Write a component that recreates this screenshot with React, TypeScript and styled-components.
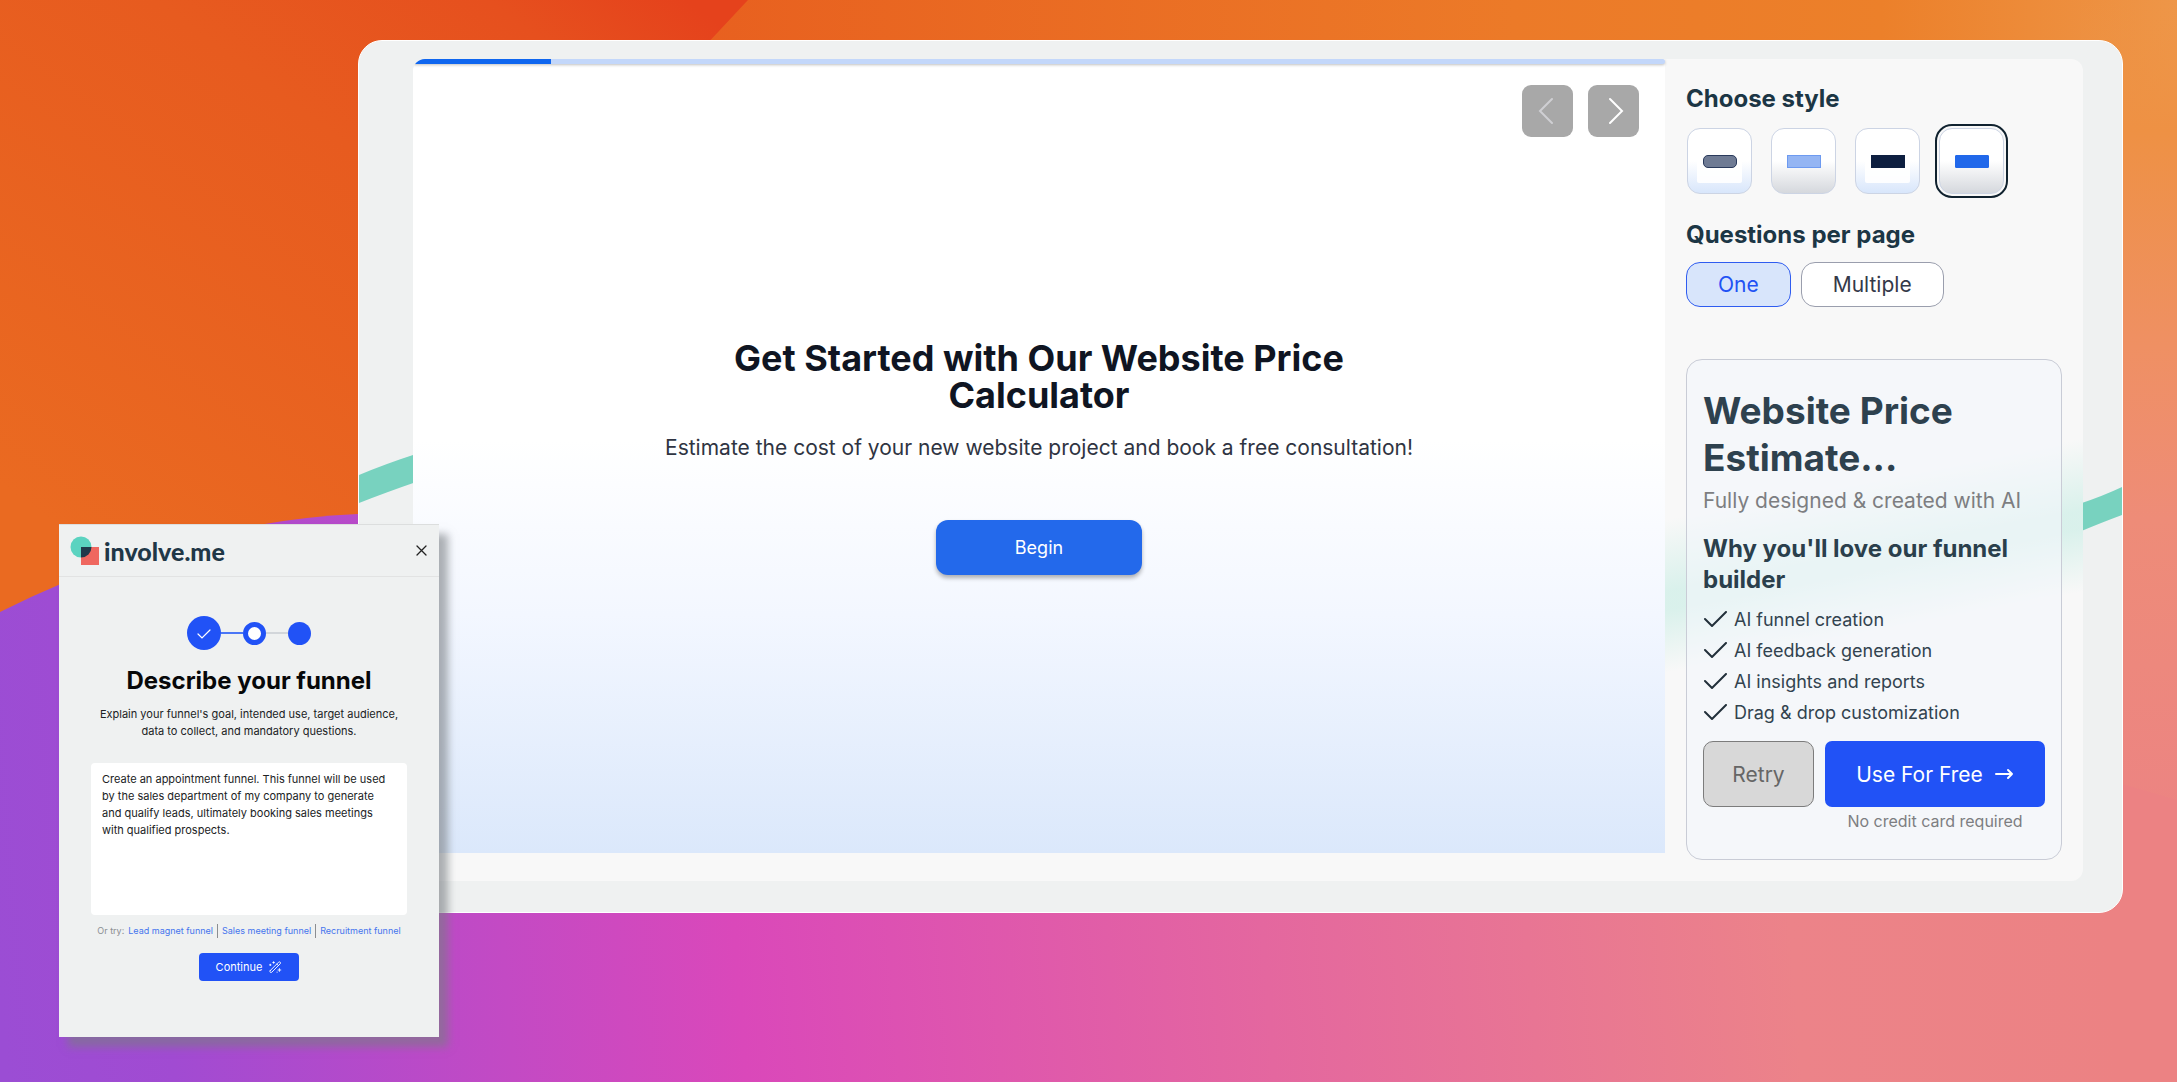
import React from "react";
import styled, { createGlobalStyle, css } from "styled-components";

const sans = `Inter, "Liberation Sans", sans-serif`;

const GlobalStyle = createGlobalStyle`
  *, *::before, *::after { box-sizing: border-box; }
  body { margin: 0; font-family: ${sans}; }
  h1, h2, h3, p, ul { margin: 0; padding: 0; }
  button, textarea { font-family: inherit; }
  button { cursor: pointer; padding: 0; }
`;

const Page = styled.main`
  position: relative;
  min-height: 100vh;
  padding: 40px 54px 168px 358px;
  overflow: hidden;
`;

const Backdrop = styled.svg`
  position: absolute;
  inset: 0;
  width: 100%;
  height: 100%;
`;

const Window = styled.section`
  position: relative;
  padding: 18px 39px 31px 54px;
  border: 1px solid #fff;
  border-radius: 24px;
  background: #eff1f1;
  overflow: hidden;
`;

const Builder = styled.div`
  position: relative;
  display: grid;
  grid-template-columns: minmax(0, 1fr) 418px;
  border-radius: 12px;
  background: #f8f8f8;
  overflow: hidden;
`;

const Preview = styled.section`
  display: flex;
  flex-direction: column;
  margin-bottom: 28px;
  background: linear-gradient(#fff 48%, #f3f7ff 70%, #dbe8fb);
`;

const Progress = styled.div`
  height: 5px;
  border-radius: 0 3px 3px 0;
  background: #c3d7fa;
  box-shadow: 0 1px 3px rgba(0, 0, 0, 0.25);
`;

const ProgressFill = styled.div`
  height: 100%;
  background: #0f66ef;
`;

const Pager = styled.nav`
  display: flex;
  justify-content: flex-end;
  gap: 15px;
  padding: 21px 26px 0;
`;

const PagerButton = styled.button<{ $dim?: boolean }>`
  display: grid;
  place-items: center;
  width: 51px;
  height: 52px;
  border: 0;
  border-radius: 9px;
  background: #a8a8a8;
  color: ${(p) => (p.$dim ? "#cfcfd3" : "#fff")};
`;

const Intro = styled.div`
  display: flex;
  flex-direction: column;
  align-items: center;
  max-width: 760px;
  margin: 203px auto 0;
  text-align: center;
`;

const IntroTitle = styled.h1`
  max-width: 660px;
  color: #0f1522;
  font-size: 36px;
  line-height: 37px;
  font-weight: 700;
`;

const IntroText = styled.p`
  margin-top: 19px;
  color: #2f3442;
  font-size: 21px;
  line-height: 30px;
`;

const BeginButton = styled.button`
  width: 206px;
  height: 55px;
  margin-top: 57px;
  border: 0;
  border-radius: 12px;
  background: #2369eb;
  box-shadow: 0 3px 4px rgba(0, 0, 0, 0.3);
  color: #fff;
  font-size: 18px;
`;

const Side = styled.aside`
  padding: 25px 21px 21px;
  background: linear-gradient(
    169deg,
    rgba(214, 240, 234, 0) 51%,
    rgba(214, 240, 234, 0.9) 59%,
    rgba(214, 240, 234, 0.9) 61%,
    rgba(214, 240, 234, 0) 68%
  );
`;

const SideTitle = styled.h2`
  color: #1c3645;
  font-size: 24px;
  line-height: 30px;
  font-weight: 700;
`;

const Styles = styled.div`
  display: flex;
  gap: 19px;
  margin: 14px 1px 26px;
`;

const StyleButton = styled.button<{ $tone: string; $selected?: boolean }>`
  display: grid;
  place-items: center;
  width: 65px;
  height: 66px;
  border: 1px solid #ccd4e4;
  border-radius: 13px;
  background: linear-gradient(#fff 50%, ${(p) => p.$tone});
  ${(p) =>
    p.$selected &&
    css`
      outline: 2px solid #10222f;
      outline-offset: 2px;
    `}
`;

const Sheet = styled.span<{ $visible?: boolean }>`
  display: grid;
  place-items: center;
  width: 45px;
  height: 44px;
  border-radius: 2px;
  background: ${(p) => (p.$visible ? "rgba(255, 255, 255, 0.92)" : "transparent")};
`;

const Swatch = styled.span<{ $fill: string; $line: string; $radius: number }>`
  width: 34px;
  height: 13px;
  border: 1px solid ${(p) => p.$line};
  border-radius: ${(p) => p.$radius}px;
  background: ${(p) => p.$fill};
`;

const Chips = styled.div`
  display: flex;
  gap: 10px;
  margin-top: 12px;
`;

const Chip = styled.button<{ $on?: boolean }>`
  height: 45px;
  padding: 0 31px;
  border: 1px solid ${(p) => (p.$on ? "#2f5cf0" : "#9a9ead")};
  border-radius: 14px;
  background: ${(p) => (p.$on ? "#d8e5fb" : "#fff")};
  color: ${(p) => (p.$on ? "#2152f4" : "#343949")};
  font-size: 21px;
`;

const Offer = styled.section`
  margin-top: 52px;
  padding: 27px 16px 28px;
  border: 1px solid #c9ccd6;
  border-radius: 16px;
  background: rgba(244, 247, 252, 0.6);
`;

const OfferTitle = styled.h2`
  color: #2e414e;
  font-size: 37px;
  line-height: 47px;
  font-weight: 700;
`;

const OfferText = styled.p`
  margin-top: 5px;
  color: #7d7e81;
  font-size: 21px;
  line-height: 30px;
`;

const OfferSubtitle = styled.h3`
  margin-top: 17px;
  color: #2a3f4c;
  font-size: 24px;
  line-height: 31px;
  font-weight: 700;
`;

const Benefits = styled.ul`
  margin-top: 9px;
  list-style: none;
`;

const Benefit = styled.li`
  display: flex;
  align-items: center;
  gap: 7px;
  color: #32434f;
  font-size: 18px;
  line-height: 31px;
`;

const Actions = styled.div`
  display: grid;
  grid-template-columns: 111px 1fr;
  gap: 4px 11px;
  margin-top: 13px;
`;

const RetryButton = styled.button`
  height: 66px;
  border: 1px solid #7c7c7c;
  border-radius: 10px;
  background: #d8d8d8;
  color: #666;
  font-size: 21px;
`;

const UseButton = styled.button`
  display: flex;
  align-items: center;
  justify-content: center;
  gap: 12px;
  height: 66px;
  border: 0;
  border-radius: 7px;
  background: #2152f6;
  color: #fff;
  font-size: 21px;
`;

const Note = styled.p`
  grid-column: 2;
  color: #7d7e81;
  font-size: 16px;
  line-height: 20px;
  text-align: center;
`;

const Dialog = styled.section`
  position: absolute;
  left: 59px;
  bottom: 45px;
  width: 380px;
  padding-bottom: 56px;
  border-top: 1px solid #dcdede;
  background: #eff1f1;
  box-shadow: 9px 10px 8px rgba(120, 125, 130, 0.6);
  text-align: center;
`;

const DialogHeader = styled.header`
  display: flex;
  align-items: center;
  justify-content: space-between;
  height: 52px;
  padding: 0 12px 0 11px;
  border-bottom: 1px solid #e2e3e3;
`;

const Brand = styled.a`
  display: flex;
  align-items: center;
  gap: 5px;
  color: #1f3747;
  font-family: Lato, sans-serif;
  font-size: 25px;
  line-height: 30px;
  font-weight: 900;
  text-decoration: none;
`;

const CloseButton = styled.button`
  display: grid;
  border: 0;
  background: none;
  color: #222;
`;

const DialogBody = styled.div`
  padding: 39px 32px 0;
`;

const Stepper = styled.div`
  display: flex;
  align-items: center;
  justify-content: center;
`;

const Step = styled.span<{ $kind: "done" | "current" | "next" }>`
  display: grid;
  place-items: center;
  width: ${(p) => (p.$kind === "done" ? 34 : 23)}px;
  height: ${(p) => (p.$kind === "done" ? 34 : 23)}px;
  border: ${(p) => (p.$kind === "current" ? "5px solid #2152f6" : 0)};
  border-radius: 50%;
  background: ${(p) => (p.$kind === "current" ? "#fff" : "#2152f6")};
  color: #fff;
`;

const StepLine = styled.span<{ $done?: boolean }>`
  width: 22px;
  height: 2px;
  background: ${(p) => (p.$done ? "#4a76f6" : "#d2d6da")};
`;

const DialogTitle = styled.h2`
  margin-top: 16px;
  color: #070809;
  font-size: 24px;
  line-height: 30px;
  font-weight: 700;
`;

const DialogText = styled.p`
  margin-top: 10px;
  color: #202224;
  font-size: 11px;
  line-height: 17px;
`;

const Prompt = styled.textarea`
  display: block;
  width: 100%;
  height: 152px;
  margin-top: 23px;
  padding: 8px 16px 8px 11px;
  border: 0;
  border-radius: 4px;
  outline: 0;
  resize: none;
  background: #fff;
  color: #202224;
  font-size: 11px;
  line-height: 17px;
`;

const Ideas = styled.div`
  display: flex;
  justify-content: center;
  gap: 4px;
  margin-top: 9px;
  color: #8b8e91;
  font-size: 9px;
  line-height: 14px;
  white-space: nowrap;
`;

const Idea = styled.a<{ $first?: boolean }>`
  color: #4575ee;
  text-decoration: none;
  ${(p) =>
    !p.$first &&
    css`
      padding-left: 4px;
      border-left: 1px solid #8b8e91;
    `}
`;

const ContinueButton = styled.button`
  display: inline-flex;
  align-items: center;
  justify-content: center;
  gap: 7px;
  width: 100px;
  height: 28px;
  margin-top: 15px;
  border: 0;
  border-radius: 4px;
  background: #2152f6;
  color: #fff;
  font-size: 11px;
  vertical-align: top;
`;

const styleOptions = [
  { name: "Rounded grey", tone: "#d8e6fb", fill: "#6f7b94", line: "#2a3a5c", radius: 5, sheet: true },
  { name: "Light blue", tone: "#d5d8dd", fill: "#94b5f3", line: "#6d9af0", radius: 0, sheet: false },
  { name: "Dark", tone: "#d8e6fb", fill: "#0e1f40", line: "#0e1f40", radius: 0, sheet: true },
  { name: "Bold blue", tone: "#d5d8dd", fill: "#2168ea", line: "#2168ea", radius: 1, sheet: false },
];

const benefits = [
  "AI funnel creation",
  "AI feedback generation",
  "AI insights and reports",
  "Drag & drop customization",
];

const ideas = ["Lead magnet funnel", "Sales meeting funnel", "Recruitment funnel"];

const promptText =
  "Create an appointment funnel. This funnel will be used by the sales department of my company to generate and qualify leads, ultimately booking sales meetings with qualified prospects.";

function Background() {
  return (
    <Backdrop viewBox="0 0 2177 1082" preserveAspectRatio="none" aria-hidden="true">
      <defs>
        <linearGradient id="sky" gradientUnits="userSpaceOnUse" x1="700" y1="0" x2="2177" y2="0">
          <stop offset="0" stopColor="#e8601f" />
          <stop offset="0.55" stopColor="#ec7a28" />
          <stop offset="0.8" stopColor="#ec802a" />
          <stop offset="1" stopColor="#ee9648" />
        </linearGradient>
        <linearGradient id="edge" x1="0" y1="0" x2="0" y2="1">
          <stop offset="0" stopColor="#ee9446" stopOpacity="0" />
          <stop offset="0.12" stopColor="#ee9144" />
          <stop offset="0.32" stopColor="#ef9063" />
          <stop offset="0.48" stopColor="#ee8c78" />
          <stop offset="0.75" stopColor="#ec8482" />
          <stop offset="1" stopColor="#ec8285" />
        </linearGradient>
        <linearGradient id="flame" gradientUnits="userSpaceOnUse" x1="180" y1="620" x2="660" y2="-20">
          <stop offset="0" stopColor="#ea6a21" />
          <stop offset="0.6" stopColor="#e75b1f" />
          <stop offset="0.85" stopColor="#e6501e" />
          <stop offset="1" stopColor="#e5421c" />
        </linearGradient>
        <linearGradient id="dusk" gradientUnits="userSpaceOnUse" x1="0" y1="1000" x2="2100" y2="830">
          <stop offset="0" stopColor="#9b4dd4" />
          <stop offset="0.08" stopColor="#a14bd2" />
          <stop offset="0.24" stopColor="#c34ac4" />
          <stop offset="0.35" stopColor="#da48ba" />
          <stop offset="0.6" stopColor="#e4679f" />
          <stop offset="0.85" stopColor="#ec8389" />
          <stop offset="1" stopColor="#ec8283" />
        </linearGradient>
      </defs>
      <rect width="2177" height="1082" fill="url(#sky)" />
      <rect x="2080" width="97" height="1082" fill="url(#edge)" />
      <path d="M0 0H748L690 62 358 640H0Z" fill="url(#flame)" />
      <path d="M0 612Q180 522 358 514H1200L2177 800V1082H0Z" fill="url(#dusk)" />
    </Backdrop>
  );
}

function Ribbons() {
  return (
    <Backdrop viewBox="0 0 1763 871" preserveAspectRatio="none" aria-hidden="true">
      <path d="M0 434Q26 423 60 412V440Q28 451 0 462Z" fill="#78d2bf" />
      <path d="M1720 463Q1744 455 1763 446V474Q1744 481 1720 491Z" fill="#78d2bf" />
    </Backdrop>
  );
}

export default function App() {
  return (
    <Page>
      <GlobalStyle />
      <Background />

      <Window>
        <Ribbons />
        <Builder>
          <Preview>
            <Progress role="progressbar" aria-valuenow={11} aria-label="Progress">
              <ProgressFill style={{ width: "11%" }} />
            </Progress>
            <Pager aria-label="Pages">
              <PagerButton $dim aria-label="Previous">
                <svg width="20" height="28" viewBox="0 0 20 28" fill="none" stroke="currentColor" strokeWidth="2" strokeLinecap="round">
                  <path d="M14 2 2 14l12 12" />
                </svg>
              </PagerButton>
              <PagerButton aria-label="Next">
                <svg width="20" height="28" viewBox="0 0 20 28" fill="none" stroke="currentColor" strokeWidth="2" strokeLinecap="round">
                  <path d="M6 2 18 14 6 26" />
                </svg>
              </PagerButton>
            </Pager>
            <Intro>
              <IntroTitle>Get Started with Our Website Price Calculator</IntroTitle>
              <IntroText>Estimate the cost of your new website project and book a free consultation!</IntroText>
              <BeginButton>Begin</BeginButton>
            </Intro>
          </Preview>

          <Side>
            <SideTitle>Choose style</SideTitle>
            <Styles>
              {styleOptions.map((s, i) => (
                <StyleButton key={s.name} $tone={s.tone} $selected={i === 3} aria-pressed={i === 3} aria-label={s.name}>
                  <Sheet $visible={s.sheet}>
                    <Swatch $fill={s.fill} $line={s.line} $radius={s.radius} />
                  </Sheet>
                </StyleButton>
              ))}
            </Styles>
            <SideTitle>Questions per page</SideTitle>
            <Chips>
              <Chip $on aria-pressed="true">One</Chip>
              <Chip aria-pressed="false">Multiple</Chip>
            </Chips>

            <Offer>
              <OfferTitle>Website Price Estimate...</OfferTitle>
              <OfferText>Fully designed &amp; created with AI</OfferText>
              <OfferSubtitle>Why you'll love our funnel builder</OfferSubtitle>
              <Benefits>
                {benefits.map((b) => (
                  <Benefit key={b}>
                    <svg width="24" height="18" viewBox="0 0 24 18" fill="none" stroke="#22303a" strokeWidth="2" strokeLinecap="round" strokeLinejoin="round">
                      <path d="m2 8 7 7L23 1" />
                    </svg>
                    {b}
                  </Benefit>
                ))}
              </Benefits>
              <Actions>
                <RetryButton>Retry</RetryButton>
                <UseButton>
                  Use For Free
                  <svg width="19" height="12" viewBox="0 0 19 12" fill="none" stroke="currentColor" strokeWidth="2" strokeLinecap="round" strokeLinejoin="round">
                    <path d="M1 6h16M13 2l4 4-4 4" />
                  </svg>
                </UseButton>
                <Note>No credit card required</Note>
              </Actions>
            </Offer>
          </Side>
        </Builder>
      </Window>

      <Dialog aria-label="Describe your funnel">
        <DialogHeader>
          <Brand href="#">
            <svg width="29" height="29" viewBox="0 0 29 29" aria-hidden="true">
              <circle cx="11" cy="11" r="10.5" fill="#5bd3c0" />
              <path d="M11 11h18v18H11z" fill="#ef675f" />
              <path d="M11 11h10.5A10.5 10.5 0 0 1 11 21.5Z" fill="#20394a" />
            </svg>
            involve.me
          </Brand>
          <CloseButton aria-label="Close">
            <svg width="11" height="11" viewBox="0 0 11 11" fill="none" stroke="currentColor" strokeWidth="1.3" strokeLinecap="round">
              <path d="m1 1 9 9M10 1l-9 9" />
            </svg>
          </CloseButton>
        </DialogHeader>
        <DialogBody>
          <Stepper>
            <Step $kind="done">
              <svg width="14" height="11" viewBox="0 0 14 11" fill="none" stroke="currentColor" strokeWidth="1.2" strokeLinecap="round">
                <path d="m1 6 4 4 8-8" />
              </svg>
            </Step>
            <StepLine $done />
            <Step $kind="current" />
            <StepLine />
            <Step $kind="next" />
          </Stepper>
          <DialogTitle>Describe your funnel</DialogTitle>
          <DialogText>
            Explain your funnel's goal, intended use, target audience,
            <br />
            data to collect, and mandatory questions.
          </DialogText>
          <Prompt aria-label="Funnel description" defaultValue={promptText} />
          <Ideas>
            <span>Or try:</span>
            {ideas.map((idea, i) => (
              <Idea key={idea} href="#" $first={i === 0}>
                {idea}
              </Idea>
            ))}
          </Ideas>
          <ContinueButton>
            Continue
            <svg width="13" height="12" viewBox="0 0 13 12" fill="none" stroke="currentColor" strokeWidth="0.9" strokeLinecap="round" strokeLinejoin="round">
              <path d="M1.2 9.6 9.6 1.2a1 1 0 0 1 1.6 1.6L2.8 11.2a1 1 0 0 1-1.6-1.6ZM7.8 3l1.6 1.6" />
              <path d="M1.3 3.2v1.4M.6 3.9H2M4.6.7v1.6M3.8 1.5h1.6M10.4 7.6v2.8M9 9h2.8M8 11.2h.2" />
            </svg>
          </ContinueButton>
        </DialogBody>
      </Dialog>
    </Page>
  );
}
